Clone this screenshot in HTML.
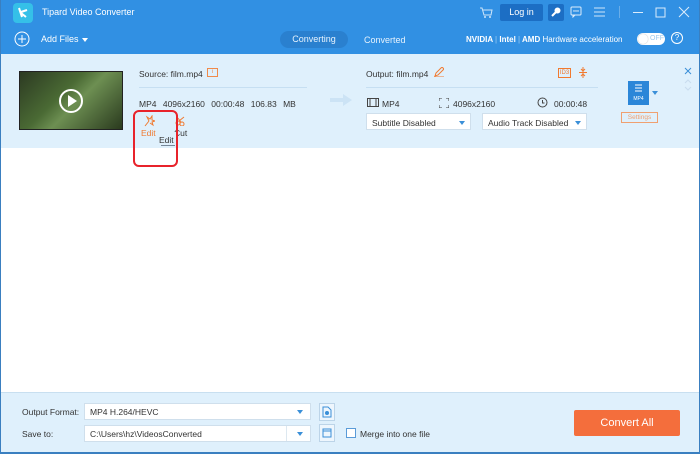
<!DOCTYPE html>
<html><head><meta charset="utf-8"><style>
*{margin:0;padding:0;box-sizing:border-box}
body{width:700px;height:454px;overflow:hidden;font-family:"Liberation Sans",sans-serif;font-size:8px;color:#333;background:#fff;position:relative}
.abs{position:absolute}
.top{left:0;top:0;width:700px;height:54px;background:#3190e3}
.w{color:#fff}
.card{left:1px;top:54px;width:698px;height:94px;background:#dff0fc}
.white{left:1px;top:148px;width:698px;height:244px;background:#fff}
.bot{left:0;top:392px;width:700px;height:62px;background:#dff0fc;border-top:1px solid #c8dff0;border-bottom:2px solid #3a7fc0}
.sel{background:#fff;border:1px solid #cfdfec;height:17px}
.tri{width:0;height:0;border-left:3.5px solid transparent;border-right:3.5px solid transparent;border-top:4px solid #3a8fd8}
</style></head><body>
<div class="abs" style="left:0;top:0;width:1px;height:454px;background:#3a7fc0;z-index:5"></div>
<div class="abs" style="right:0;top:0;width:1px;height:454px;background:#3a7fc0;z-index:5"></div>
<div class="abs top"></div>
<div class="abs" style="left:13px;top:3px;width:20px;height:20px;border-radius:4px;background:#35c0e8"></div>
<svg class="abs" style="left:15px;top:6px" width="16" height="14"><path d="M4 2 L7 11 M6 6 L12 4 M6 7 L11 11" stroke="#fff" stroke-width="2" fill="none"/></svg>
<div class="abs w" style="left:42px;top:7px;font-size:9px">Tipard Video Converter</div>
<svg class="abs" style="left:479px;top:6px" width="14" height="13"><path d="M1 2h2l2 7h7l1-5H4" stroke="#cfe6fa" fill="none"/><circle cx="6" cy="11" r="1" fill="#cfe6fa"/><circle cx="11" cy="11" r="1" fill="#cfe6fa"/></svg>
<div class="abs w" style="left:500px;top:4px;width:43px;height:17px;background:#1c6ec4;border-radius:2px;text-align:center;line-height:17px;font-size:9px">Log in</div>
<div class="abs" style="left:548px;top:4px;width:16px;height:17px;background:#1c6ec4;border-radius:2px"></div>
<svg class="abs" style="left:550px;top:6px" width="12" height="12"><circle cx="7.5" cy="4.5" r="3" fill="#fff"/><path d="M6 6 L2 10" stroke="#fff" stroke-width="2"/></svg>
<svg class="abs" style="left:570px;top:6px" width="12" height="12"><rect x="1" y="1" width="10" height="8" rx="1" stroke="#dcecfb" fill="none"/><path d="M3 9l0 2 2-2" stroke="#dcecfb" fill="none"/><circle cx="4" cy="5" r=".7" fill="#fff"/><circle cx="6" cy="5" r=".7" fill="#fff"/><circle cx="8" cy="5" r=".7" fill="#fff"/></svg>
<svg class="abs" style="left:594px;top:7px" width="11" height="10"><path d="M0 1h11M0 5h11M0 9h11" stroke="#cfe6fa"/></svg>
<div class="abs" style="left:619px;top:6px;width:1px;height:12px;background:#6aaee9"></div>
<svg class="abs" style="left:630px;top:6px" width="60" height="13"><path d="M3 6.5h10" stroke="#dcecfb"/><rect x="26" y="2" width="9" height="9" stroke="#dcecfb" fill="none"/><path d="M49 1l10 10M59 1l-10 10" stroke="#dcecfb"/></svg>
<svg class="abs" style="left:14px;top:31px" width="16" height="16"><circle cx="8" cy="8" r="7" stroke="#fff" fill="none"/><path d="M8 4v8M4 8h8" stroke="#fff"/></svg>
<div class="abs w" style="left:41px;top:34px;font-size:9px">Add Files</div>
<div class="abs" style="left:82px;top:38px;border-left:3.5px solid transparent;border-right:3.5px solid transparent;border-top:4px solid #fff"></div>
<div class="abs" style="left:280px;top:31px;width:68px;height:17px;background:#2a80cf;border-radius:9px;color:#e6f2fd;text-align:center;line-height:17px;font-size:9px">Converting</div>
<div class="abs" style="left:364px;top:35px;color:#e6f2fd;font-size:9px">Converted</div>
<div class="abs w" style="left:466px;top:35px;font-size:8px;font-weight:bold">NVIDIA <span style="color:#9fcdf2;font-weight:normal">|</span> Intel <span style="color:#9fcdf2;font-weight:normal">|</span> AMD <span style="font-weight:normal">Hardware acceleration</span></div>
<div class="abs" style="left:637px;top:33px;width:28px;height:12px;border-radius:6px;background:#fff"></div>
<div class="abs" style="left:638px;top:34px;width:10px;height:10px;border-radius:5px;background:#fff;box-shadow:0 0 1px #999"></div>
<div class="abs" style="left:650px;top:35px;color:#9cc9ee;font-size:7px">OFF</div>
<div class="abs" style="left:671px;top:32px;width:12px;height:12px;border:1px solid #fff;border-radius:50%;color:#fff;font-size:8px;text-align:center;line-height:10px">?</div>

<div class="abs card"></div>
<div class="abs white"></div>
<div class="abs" style="left:19px;top:71px;width:104px;height:59px;background:linear-gradient(135deg,#2c3a22,#4a6a34 40%,#6d8f52 55%,#2a3a1e);border:1px solid #222"></div>
<div class="abs" style="left:59px;top:89px;width:24px;height:24px;border:2px solid #fff;border-radius:50%"></div>
<div class="abs" style="left:68px;top:95px;border-top:6px solid transparent;border-bottom:6px solid transparent;border-left:9px solid #fff"></div>
<div class="abs" style="left:139px;top:69px;font-size:8.5px">Source: film.mp4</div>
<div class="abs" style="left:207px;top:68px;width:11px;height:9px;border:1px solid #f08a4a;color:#f08a4a;font-size:6px;text-align:center;line-height:7px">i</div>
<div class="abs" style="left:139px;top:87px;width:168px;height:1px;background:#c6dff2"></div>
<div class="abs" style="left:139px;top:99px;font-size:8.5px;word-spacing:4px">MP4 4096x2160 00:00:48 106.83 MB</div>
<svg class="abs" style="left:143px;top:115px" width="12" height="12"><path d="M2 11l4-5M6 6l-2-4 3 2 2-3 0 4 3 1-3 1 1 3-3-2" stroke="#f07a30" fill="none"/></svg>
<div class="abs" style="left:141px;top:128px;color:#f07a30;font-size:8.5px">Edit</div>
<svg class="abs" style="left:175px;top:116px" width="10" height="10"><circle cx="3" cy="7" r="2" stroke="#f07a30" fill="none"/><circle cx="7" cy="8" r="2" stroke="#f07a30" fill="none"/><path d="M4 5l5-4M6 6L2 1" stroke="#f07a30"/></svg>
<div class="abs" style="left:174px;top:128px;font-size:8.5px">Cut</div>
<div class="abs" style="left:157px;top:132px;width:20px;height:14px;background:#dff0fc"></div>
<div class="abs" style="left:159px;top:135px;font-size:8.5px">Edit</div>
<div class="abs" style="left:161px;top:145px;width:14px;height:1px;background:#789"></div>
<div class="abs" style="left:133px;top:110px;width:45px;height:57px;border:2px solid #e8232b;border-radius:6px"></div>
<svg class="abs" style="left:330px;top:94px" width="22" height="12"><path d="M0 4h13V0l9 6-9 6V8H0z" fill="#cce3f5"/></svg>

<div class="abs" style="left:366px;top:69px;font-size:8.5px">Output: film.mp4</div>
<svg class="abs" style="left:434px;top:67px" width="10" height="10"><path d="M1 9l1-3 6-6 2 2-6 6z M0 10h10" stroke="#f07a30" fill="none"/></svg>
<div class="abs" style="left:558px;top:68px;width:13px;height:10px;border:1px solid #f07a30;color:#f07a30;font-size:6px;text-align:center;line-height:8px">ID3</div>
<svg class="abs" style="left:578px;top:67px" width="10" height="11"><path d="M5 0v11M1 5.5h8M3 2l2 2 2-2M3 9l2-2 2 2" stroke="#f07a30" fill="none"/></svg>
<div class="abs" style="left:366px;top:87px;width:232px;height:1px;background:#c6dff2"></div>
<svg class="abs" style="left:367px;top:98px" width="12" height="9"><rect x=".5" y=".5" width="11" height="8" stroke="#444" fill="none"/><path d="M3 .5v8M9 .5v8" stroke="#444"/></svg>
<div class="abs" style="left:382px;top:99px;font-size:8.5px">MP4</div>
<svg class="abs" style="left:439px;top:98px" width="10" height="10"><path d="M0 3V0h3M7 0h3v3M10 7v3H7M3 10H0V7" stroke="#444" fill="none"/></svg>
<div class="abs" style="left:453px;top:99px;font-size:8.5px">4096x2160</div>
<svg class="abs" style="left:537px;top:97px" width="11" height="11"><circle cx="5.5" cy="5.5" r="4.5" stroke="#444" fill="none"/><path d="M5.5 3v3h2" stroke="#444" fill="none"/></svg>
<div class="abs" style="left:554px;top:99px;font-size:8.5px">00:00:48</div>
<div class="abs sel" style="left:366px;top:113px;width:105px"></div>
<div class="abs" style="left:372px;top:118px;font-size:8.5px">Subtitle Disabled</div>
<div class="abs tri" style="left:459px;top:121px"></div>
<div class="abs sel" style="left:482px;top:113px;width:105px"></div>
<div class="abs" style="left:488px;top:118px;font-size:8.5px">Audio Track Disabled</div>
<div class="abs tri" style="left:575px;top:121px"></div>
<div class="abs" style="left:628px;top:81px;width:21px;height:24px;background:#2b86d8"></div>
<div class="abs" style="left:628px;top:96px;width:21px;color:#fff;font-size:5px;text-align:center">MP4</div>
<svg class="abs" style="left:634px;top:84px" width="9" height="9"><path d="M1 1h7M1 4h7M1 7h7" stroke="#fff"/></svg>
<div class="abs tri" style="left:652px;top:91px"></div>
<div class="abs" style="left:621px;top:112px;width:37px;height:11px;border:1px solid #f0a070;color:#f0a070;font-size:6.5px;text-align:center;line-height:9px">Settings</div>
<svg class="abs" style="left:684px;top:67px" width="8" height="8"><path d="M1 1l6 6M7 1L1 7" stroke="#3a8fd8"/></svg>
<svg class="abs" style="left:684px;top:78px" width="8" height="14"><path d="M1 5l3-3 3 3M1 9l3 3 3-3" stroke="#c8dcee" fill="none"/></svg>

<div class="abs bot"></div>
<div class="abs" style="left:22px;top:407px;font-size:8.5px">Output Format:</div>
<div class="abs sel" style="left:84px;top:403px;width:227px;height:17px"></div>
<div class="abs" style="left:90px;top:407px;font-size:8.5px">MP4 H.264/HEVC</div>
<div class="abs tri" style="left:297px;top:410px"></div>
<div class="abs" style="left:319px;top:403px;width:16px;height:18px;border:1px solid #bcd4e8;background:#eef6fd"></div>
<svg class="abs" style="left:322px;top:406px" width="10" height="12"><path d="M1 1h5l3 3v7H1z" stroke="#3a8fd8" fill="none"/><circle cx="5" cy="7" r="2" fill="#3a8fd8"/></svg>
<div class="abs" style="left:22px;top:429px;font-size:8.5px">Save to:</div>
<div class="abs sel" style="left:84px;top:425px;width:227px;height:17px"></div>
<div class="abs" style="left:286px;top:426px;width:1px;height:15px;background:#dde8f0"></div>
<div class="abs" style="left:90px;top:429px;font-size:8.5px">C:\Users\hz\VideosConverted</div>
<div class="abs tri" style="left:297px;top:432px"></div>
<div class="abs" style="left:319px;top:424px;width:16px;height:18px;border:1px solid #bcd4e8;background:#eef6fd"></div>
<svg class="abs" style="left:322px;top:428px" width="10" height="10"><path d="M1 1h8v8H1z M1 3h8" stroke="#3a8fd8" fill="none"/></svg>
<div class="abs" style="left:346px;top:428px;width:10px;height:10px;border:1px solid #5a9bd8;background:#fff"></div>
<div class="abs" style="left:360px;top:429px;font-size:8.5px">Merge into one file</div>
<div class="abs" style="left:574px;top:410px;width:106px;height:26px;background:#f46e3c;border-radius:2px;color:#fff;font-size:11px;text-align:center;line-height:26px">Convert All</div>
</body></html>
